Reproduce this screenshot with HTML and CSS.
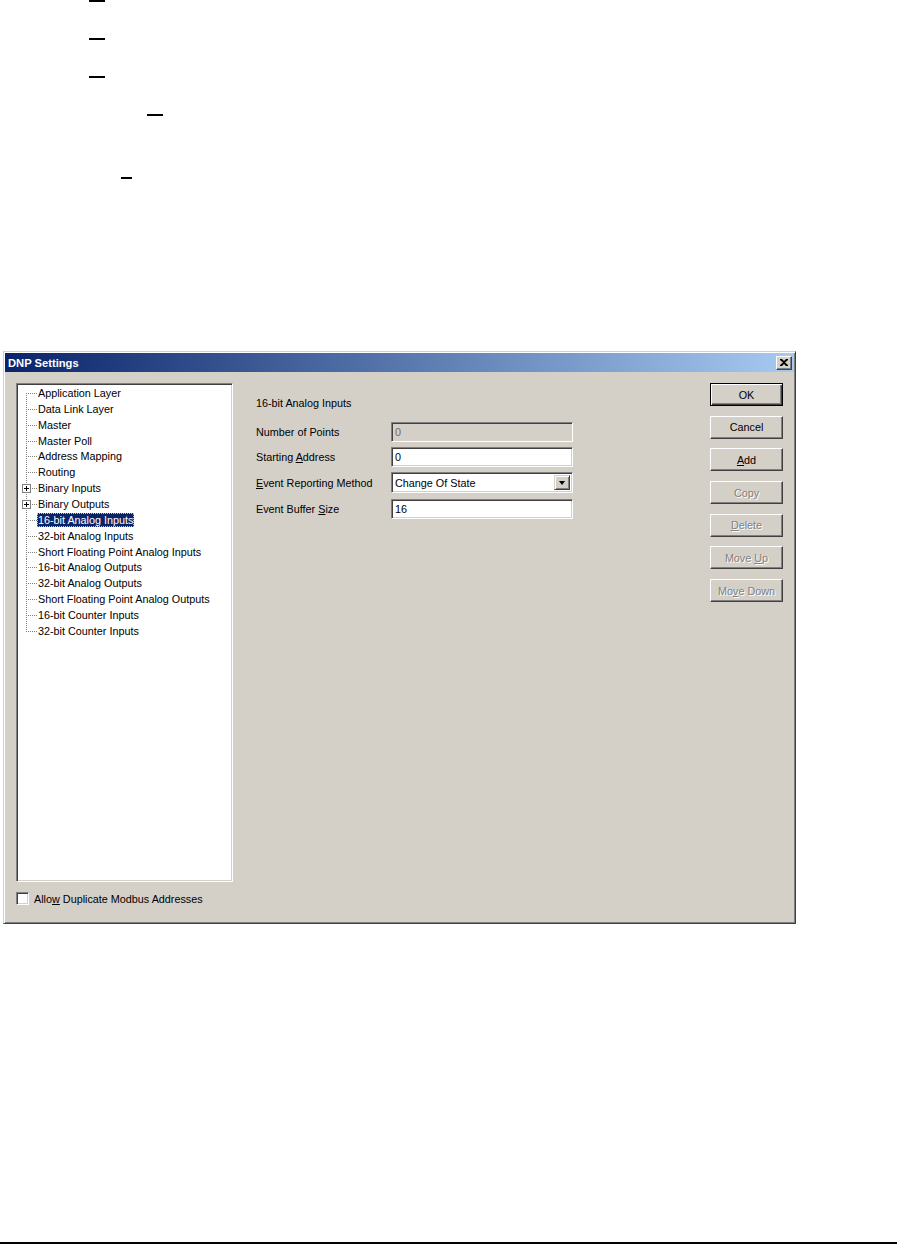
FILE: index.html
```html
<!DOCTYPE html>
<html>
<head>
    <title>DNP Settings</title>
    <link rel="stylesheet" href="styles.css">
</head>
<body>
    <div class="mark m1"></div>
    <div class="mark m2"></div>
    <div class="mark m3"></div>
    <div class="mark m4"></div>
    <div class="mark m5"></div>

    <div class="dialog">
        <div class="titlebar">
            <span class="title">DNP Settings</span>
            <span class="close-btn">
                <svg width="8" height="7" viewBox="0 0 8 7"><path d="M0 0h2l2 2 2-2h2v1l-3 2.5 3 2.5v1h-2l-2-2-2 2h-2v-1l3-2.5-3-2.5z" fill="#000"/></svg>
            </span>
        </div>

        <div class="dlg-body">
            <div class="left-col">
                <div class="tree">
                    <div class="node first"><span class="twig"></span><span class="label">Application Layer</span></div>
                    <div class="node"><span class="twig"></span><span class="label">Data Link Layer</span></div>
                    <div class="node"><span class="twig"></span><span class="label">Master</span></div>
                    <div class="node"><span class="twig"></span><span class="label">Master Poll</span></div>
                    <div class="node"><span class="twig"></span><span class="label">Address Mapping</span></div>
                    <div class="node"><span class="twig"></span><span class="label">Routing</span></div>
                    <div class="node"><span class="twig"><span class="plus"></span></span><span class="label">Binary Inputs</span></div>
                    <div class="node"><span class="twig"><span class="plus"></span></span><span class="label">Binary Outputs</span></div>
                    <div class="node"><span class="twig"></span><span class="label selected">16-bit Analog Inputs</span></div>
                    <div class="node"><span class="twig"></span><span class="label">32-bit Analog Inputs</span></div>
                    <div class="node"><span class="twig"></span><span class="label">Short Floating Point Analog Inputs</span></div>
                    <div class="node"><span class="twig"></span><span class="label">16-bit Analog Outputs</span></div>
                    <div class="node"><span class="twig"></span><span class="label">32-bit Analog Outputs</span></div>
                    <div class="node"><span class="twig"></span><span class="label">Short Floating Point Analog Outputs</span></div>
                    <div class="node"><span class="twig"></span><span class="label">16-bit Counter Inputs</span></div>
                    <div class="node last"><span class="twig"></span><span class="label">32-bit Counter Inputs</span></div>
                </div>
                <div class="check-row">
                    <span class="checkbox"></span>
                    <span>Allo<u>w</u> Duplicate Modbus Addresses</span>
                </div>
            </div>

            <div class="panel">
                <div class="panel-title">16-bit Analog Inputs</div>
                <div class="fields">
                    <div class="field">
                        <span class="field-label">Number of Points</span>
                        <span class="edit disabled">0</span>
                    </div>
                    <div class="field">
                        <span class="field-label">Starting <u>A</u>ddress</span>
                        <span class="edit">0</span>
                    </div>
                    <div class="field">
                        <span class="field-label"><u>E</u>vent Reporting Method</span>
                        <span class="edit combo">
                            <span class="combo-text">Change Of State</span>
                            <span class="combo-btn"><span class="arrow"></span></span>
                        </span>
                    </div>
                    <div class="field">
                        <span class="field-label">Event Buffer <u>S</u>ize</span>
                        <span class="edit">16</span>
                    </div>
                </div>
            </div>

            <div class="buttons">
                <div class="btn default"><span>OK</span></div>
                <div class="btn"><span>Cancel</span></div>
                <div class="btn"><span><u>A</u>dd</span></div>
                <div class="btn off"><span>Copy</span></div>
                <div class="btn off"><span><u>D</u>elete</span></div>
                <div class="btn off"><span>Move <u>U</u>p</span></div>
                <div class="btn off"><span>Mo<u>v</u>e Down</span></div>
            </div>
        </div>
    </div>

    <div class="rule"></div>
</body>
</html>
```

FILE: styles.css
```css
body {
    margin: 0;
    background-color: #fff;
    font-family: "Liberation Sans", Arial, sans-serif;
    font-size: 10.8px;
    color: #000;
}
u {
    text-decoration: underline;
    text-underline-offset: 1px;
}

/* marks from the page above the dialog */
.mark {
    height: 2px;
    width: 16px;
    background-color: #000;
}
.m1 { margin-left: 89px; }
.m2 { margin: 36px 0 0 89px; }
.m3 { margin: 36px 0 0 89px; }
.m4 { margin: 36px 0 0 147px; }
.m5 { margin: 61px 0 0 121px; width: 11px; }

.rule {
    margin-top: 318px;
    height: 2px;
    background-color: #000;
}

/* dialog frame */
.dialog {
    margin: 172px 0 0 3px;
    width: 793px;
    height: 573px;
    box-sizing: border-box;
    padding: 1px;
    background-color: #d4d0c8;
    border: 1px solid;
    border-color: #d4d0c8 #404040 #404040 #d4d0c8;
    box-shadow: inset 1px 1px #fff, inset -1px -1px #808080;
    display: flex;
    flex-direction: column;
}
.titlebar {
    height: 19px;
    background: linear-gradient(to right, #0a246a, #a6caf0);
    display: flex;
    align-items: center;
    justify-content: space-between;
    padding: 0 2px 0 3px;
}
.title {
    color: #fff;
    font-weight: bold;
    font-size: 11.2px;
}
.close-btn {
    width: 16px;
    height: 14px;
    box-sizing: border-box;
    background-color: #d4d0c8;
    border: 1px solid;
    border-color: #fff #404040 #404040 #fff;
    box-shadow: inset -1px -1px #808080;
    display: flex;
    align-items: center;
    justify-content: center;
    padding-bottom: 1px;
}

.dlg-body {
    flex: 1;
    display: flex;
    padding: 11px 11px 0 11px;
}

/* tree */
.left-col {
    width: 217px;
    flex: none;
}
.tree {
    height: 499px;
    box-sizing: border-box;
    background-color: #fff;
    border: 1px solid;
    border-color: #808080 #fff #fff #808080;
    box-shadow: inset 1px 1px #404040, inset -1px -1px #d4d0c8;
    padding: 1px 0 0 9px;
}
.node {
    height: 15.86px;
    display: flex;
    align-items: center;
}
.twig {
    width: 11px;
    height: 100%;
    flex: none;
    display: flex;
    align-items: center;
    background:
        repeating-linear-gradient(to right, #808080 0 1px, transparent 1px 2px) 0 8px / 100% 1px no-repeat,
        repeating-linear-gradient(to bottom, #808080 0 1px, transparent 1px 2px) 0 0 / 1px 100% no-repeat;
}
.first .twig {
    background:
        repeating-linear-gradient(to right, #808080 0 1px, transparent 1px 2px) 0 8px / 100% 1px no-repeat,
        repeating-linear-gradient(to bottom, #808080 0 1px, transparent 1px 2px) 0 8px / 1px 8px no-repeat;
}
.last .twig {
    background:
        repeating-linear-gradient(to right, #808080 0 1px, transparent 1px 2px) 0 8px / 100% 1px no-repeat,
        repeating-linear-gradient(to bottom, #808080 0 1px, transparent 1px 2px) 0 0 / 1px 9px no-repeat;
}
.plus {
    width: 9px;
    height: 9px;
    box-sizing: border-box;
    margin: 1px 0 0 -4px;
    border: 1px solid #808080;
    background:
        linear-gradient(#000, #000) center / 5px 1px no-repeat,
        linear-gradient(#000, #000) center / 1px 5px no-repeat,
        #fff;
}
.label {
    height: 14px;
    line-height: 14px;
    padding: 0 1px;
    white-space: nowrap;
    box-sizing: border-box;
}
.label.selected {
    background-color: #0a246a;
    color: #fff;
    outline: 1px dotted #e8c860;
    outline-offset: -1px;
}

.check-row {
    margin-top: 10px;
    display: flex;
    align-items: center;
    gap: 5px;
}
.checkbox {
    width: 13px;
    height: 13px;
    box-sizing: border-box;
    background-color: #fff;
    border: 1px solid;
    border-color: #808080 #fff #fff #808080;
    box-shadow: inset 1px 1px #404040, inset -1px -1px #d4d0c8;
}

/* settings panel */
.panel {
    flex: 1;
    margin-left: 23px;
    padding-top: 13px;
}
.panel-title {
    line-height: 14px;
    height: 14px;
}
.fields {
    margin-top: 12px;
    display: flex;
    flex-direction: column;
    gap: 5.2px;
}
.field {
    display: flex;
    align-items: center;
}
.field-label {
    width: 135px;
    flex: none;
}
.edit {
    width: 182px;
    height: 20px;
    box-sizing: border-box;
    background-color: #fff;
    border: 1px solid;
    border-color: #808080 #fff #fff #808080;
    box-shadow: inset 1px 1px #404040, inset -1px -1px #d4d0c8;
    padding: 0 3px;
    line-height: 18px;
}
.edit.disabled {
    background-color: #d4d0c8;
    color: #6c6c6c;
}
.edit.combo {
    height: 21px;
    display: flex;
    align-items: center;
    padding: 2px 2px 2px 3px;
}
.combo-text {
    flex: 1;
}
.combo-btn {
    width: 16px;
    height: 100%;
    box-sizing: border-box;
    background-color: #d4d0c8;
    border: 1px solid;
    border-color: #d4d0c8 #404040 #404040 #d4d0c8;
    box-shadow: inset 1px 1px #fff, inset -1px -1px #808080;
    display: flex;
    align-items: center;
    justify-content: center;
}
.arrow {
    width: 0;
    height: 0;
    border-left: 3.5px solid transparent;
    border-right: 3.5px solid transparent;
    border-top: 4px solid #000;
}

/* command buttons */
.buttons {
    width: 73px;
    flex: none;
    display: flex;
    flex-direction: column;
    gap: 9.7px;
}
.btn {
    height: 23px;
    box-sizing: border-box;
    border: 1px solid;
    border-color: #fff #404040 #404040 #fff;
    box-shadow: inset -1px -1px #808080;
    display: flex;
    align-items: center;
    justify-content: center;
    white-space: nowrap;
}
.btn.default {
    border: 1px solid #000;
    box-shadow: inset 1px 1px #fff, inset -1px -1px #404040, inset -2px -2px #808080;
}
.btn.off {
    color: #808080;
    text-shadow: 1px 1px #fff;
}
```
